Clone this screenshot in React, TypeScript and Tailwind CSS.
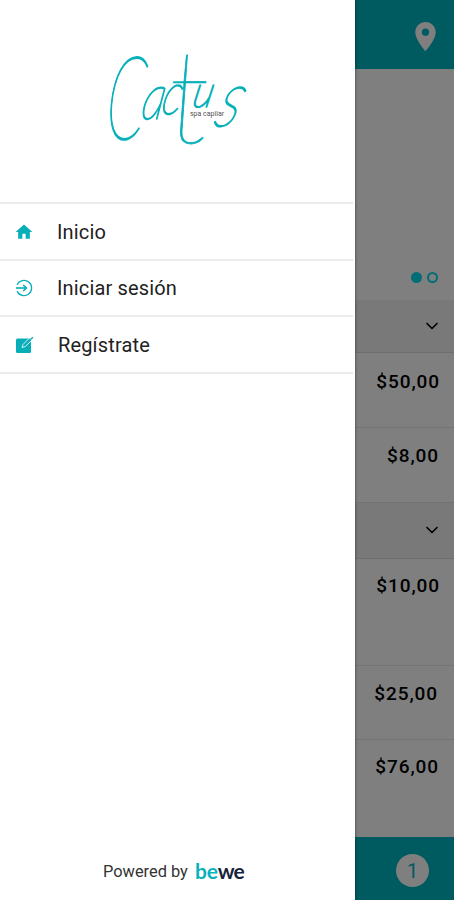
import { ReactNode } from "react";
import { FiChevronDown } from "react-icons/fi";
import { MdHome, MdLocationOn } from "react-icons/md";

interface MenuItem {
  label: string;
  icon: ReactNode;
  className: string;
}

interface RowProps {
  price: string;
  className: string;
}

function LoginIcon() {
  return (
    <svg width="18" height="18" viewBox="0 0 18 18" fill="none" stroke="currentColor" strokeWidth="1.3">
      <path d="M2.1 5.8A7.6 7.6 0 1 1 2.1 12.2" />
      <path d="M1 9H11" strokeWidth="1.6" />
      <path d="M8.2 6L11.4 9L8.2 12" strokeWidth="1.6" />
    </svg>
  );
}

function RegisterIcon() {
  return (
    <svg width="19" height="18" viewBox="0 0 19 18">
      <rect x="1" y="2.5" width="15" height="14.5" rx="1.5" fill="currentColor" />
      <path d="M7 11.5L8 8.5L14.5 2L17 4L10.2 10.6Z" fill="currentColor" stroke="white" strokeWidth=".8" />
      <path d="M15.4 2.8L17.3 .8L18.3 1.8L16.4 3.8Z" fill="currentColor" />
    </svg>
  );
}

function Logo() {
  return (
    <svg
      width="155"
      height="110"
      viewBox="0 0 155 110"
      className="overflow-visible font-['Lato',sans-serif] font-thin italic"
      fill="#08b0b9"
      stroke="#08b0b9"
      strokeWidth="1.7"
    >
      <text transform="translate(4 94) skewX(-5) scale(.52 1)" fontSize="116">C</text>
      <text transform="translate(40 74) skewX(-10) scale(.72 1)" fontSize="64">a</text>
      <text transform="translate(60 69) skewX(-12) scale(.72 1)" fontSize="58">c</text>
      <text transform="translate(70 98) skewX(3) scale(1.02 1)" fontSize="131" strokeWidth="0.8">t</text>
      <text transform="translate(91 62) skewX(-12) scale(.92 1)" fontSize="44">u</text>
      <text transform="translate(112 81) skewX(-20) scale(.78 1)" fontSize="78">s</text>
      <text x="90" y="71" fontSize="7" fill="#555" stroke="none" className="font-['Roboto',sans-serif] font-normal not-italic">
        spa capilar
      </text>
    </svg>
  );
}

function PriceRow({ price, className }: RowProps) {
  return (
    <div className={`flex items-start justify-end border-b border-[#e6e6e6] ${className}`}>
      <span className="text-[19px] leading-6 font-medium tracking-[0.9px] text-black">{price}</span>
    </div>
  );
}

function Section({ className }: { className: string }) {
  return (
    <div className={`flex items-center justify-end border-b border-[#dcdcdc] bg-[#f3f3f3] pr-3 pb-px ${className}`}>
      <FiChevronDown size={20} />
    </div>
  );
}

function Drawer() {
  const items: MenuItem[] = [
    { label: "Inicio", icon: <MdHome size={20} />, className: "pl-[57px]" },
    { label: "Iniciar sesión", icon: <LoginIcon />, className: "pl-[57px]" },
    { label: "Regístrate", icon: <RegisterIcon />, className: "pl-[58px]" },
  ];

  return (
    <aside className="absolute inset-y-0 left-0 flex w-[355px] flex-col bg-white shadow-[0_0_3px_rgba(0,0,0,0.5)]">
      <div className="flex h-[202px] pt-[45px] pl-[100px]">
        <Logo />
      </div>

      {/* Menu */}
      <ul className="mr-0.5 border-t-2 border-[#ebebeb]">
        {items.map(({ label, icon, className }) => (
          <li key={label} className="relative flex h-[56.67px] items-center border-b-2 border-[#ebebeb] pt-px">
            <span className="absolute left-[14px] flex w-5 justify-center text-[#08aeb8]">{icon}</span>
            <a className={`text-[20px] leading-6 tracking-[0.15px] text-[#222] ${className}`}>{label}</a>
          </li>
        ))}
      </ul>

      {/* Brand */}
      <div className="mt-auto mb-[16px] flex items-center pl-[103px] text-[16.4px] leading-6 text-[#333]">
        <span className="w-[92px]">Powered by</span>
        <span className="pb-px font-['Lato',sans-serif] text-[21px] font-bold tracking-[-0.2px] text-[#08b2bc]">
          be<span className="tracking-[-0.8px] text-[#16243a]">we</span>
        </span>
      </div>
    </aside>
  );
}

export default function App() {
  return (
    <div className="relative h-[900px] w-[454px] overflow-hidden bg-white font-['Roboto',sans-serif]">
      <main className="flex h-full flex-col">
        <header className="flex h-[69px] items-center justify-end bg-[#00b7c2] pt-[3px] pr-[11px] text-white">
          <MdLocationOn size={35} />
        </header>

        {/* Carousel */}
        <div className="flex h-[231px] items-end justify-end gap-[5px] pr-[16px] pb-[17px]">
          <span className="size-[11px] rounded-full bg-[#00dce8]" />
          <span className="size-[11px] rounded-full border-2 border-[#00dce8]" />
        </div>

        <Section className="h-[53px]" />
        <PriceRow price="$50,00" className="h-[75px] pt-[17px] pr-[14px]" />
        <PriceRow price="$8,00" className="h-[75px] pt-[16px] pr-[15px]" />
        <Section className="h-[56px]" />
        <PriceRow price="$10,00" className="h-[107px] pt-[15px] pr-[14px]" />
        <PriceRow price="$25,00" className="h-[74px] pt-[16px] pr-[16px]" />
        <PriceRow price="$76,00" className="h-[97px] border-b-0 pt-[15px] pr-[15px]" />

        <footer className="flex flex-1 items-center justify-end bg-[#00b7c2] pt-[4px] pr-[25px]">
          <span className="flex size-[33px] items-center justify-center rounded-full bg-white text-[20px] text-[#00b7c2]">
            1
          </span>
        </footer>
      </main>

      <div className="absolute inset-0 bg-black/50" />
      <Drawer />
    </div>
  );
}
